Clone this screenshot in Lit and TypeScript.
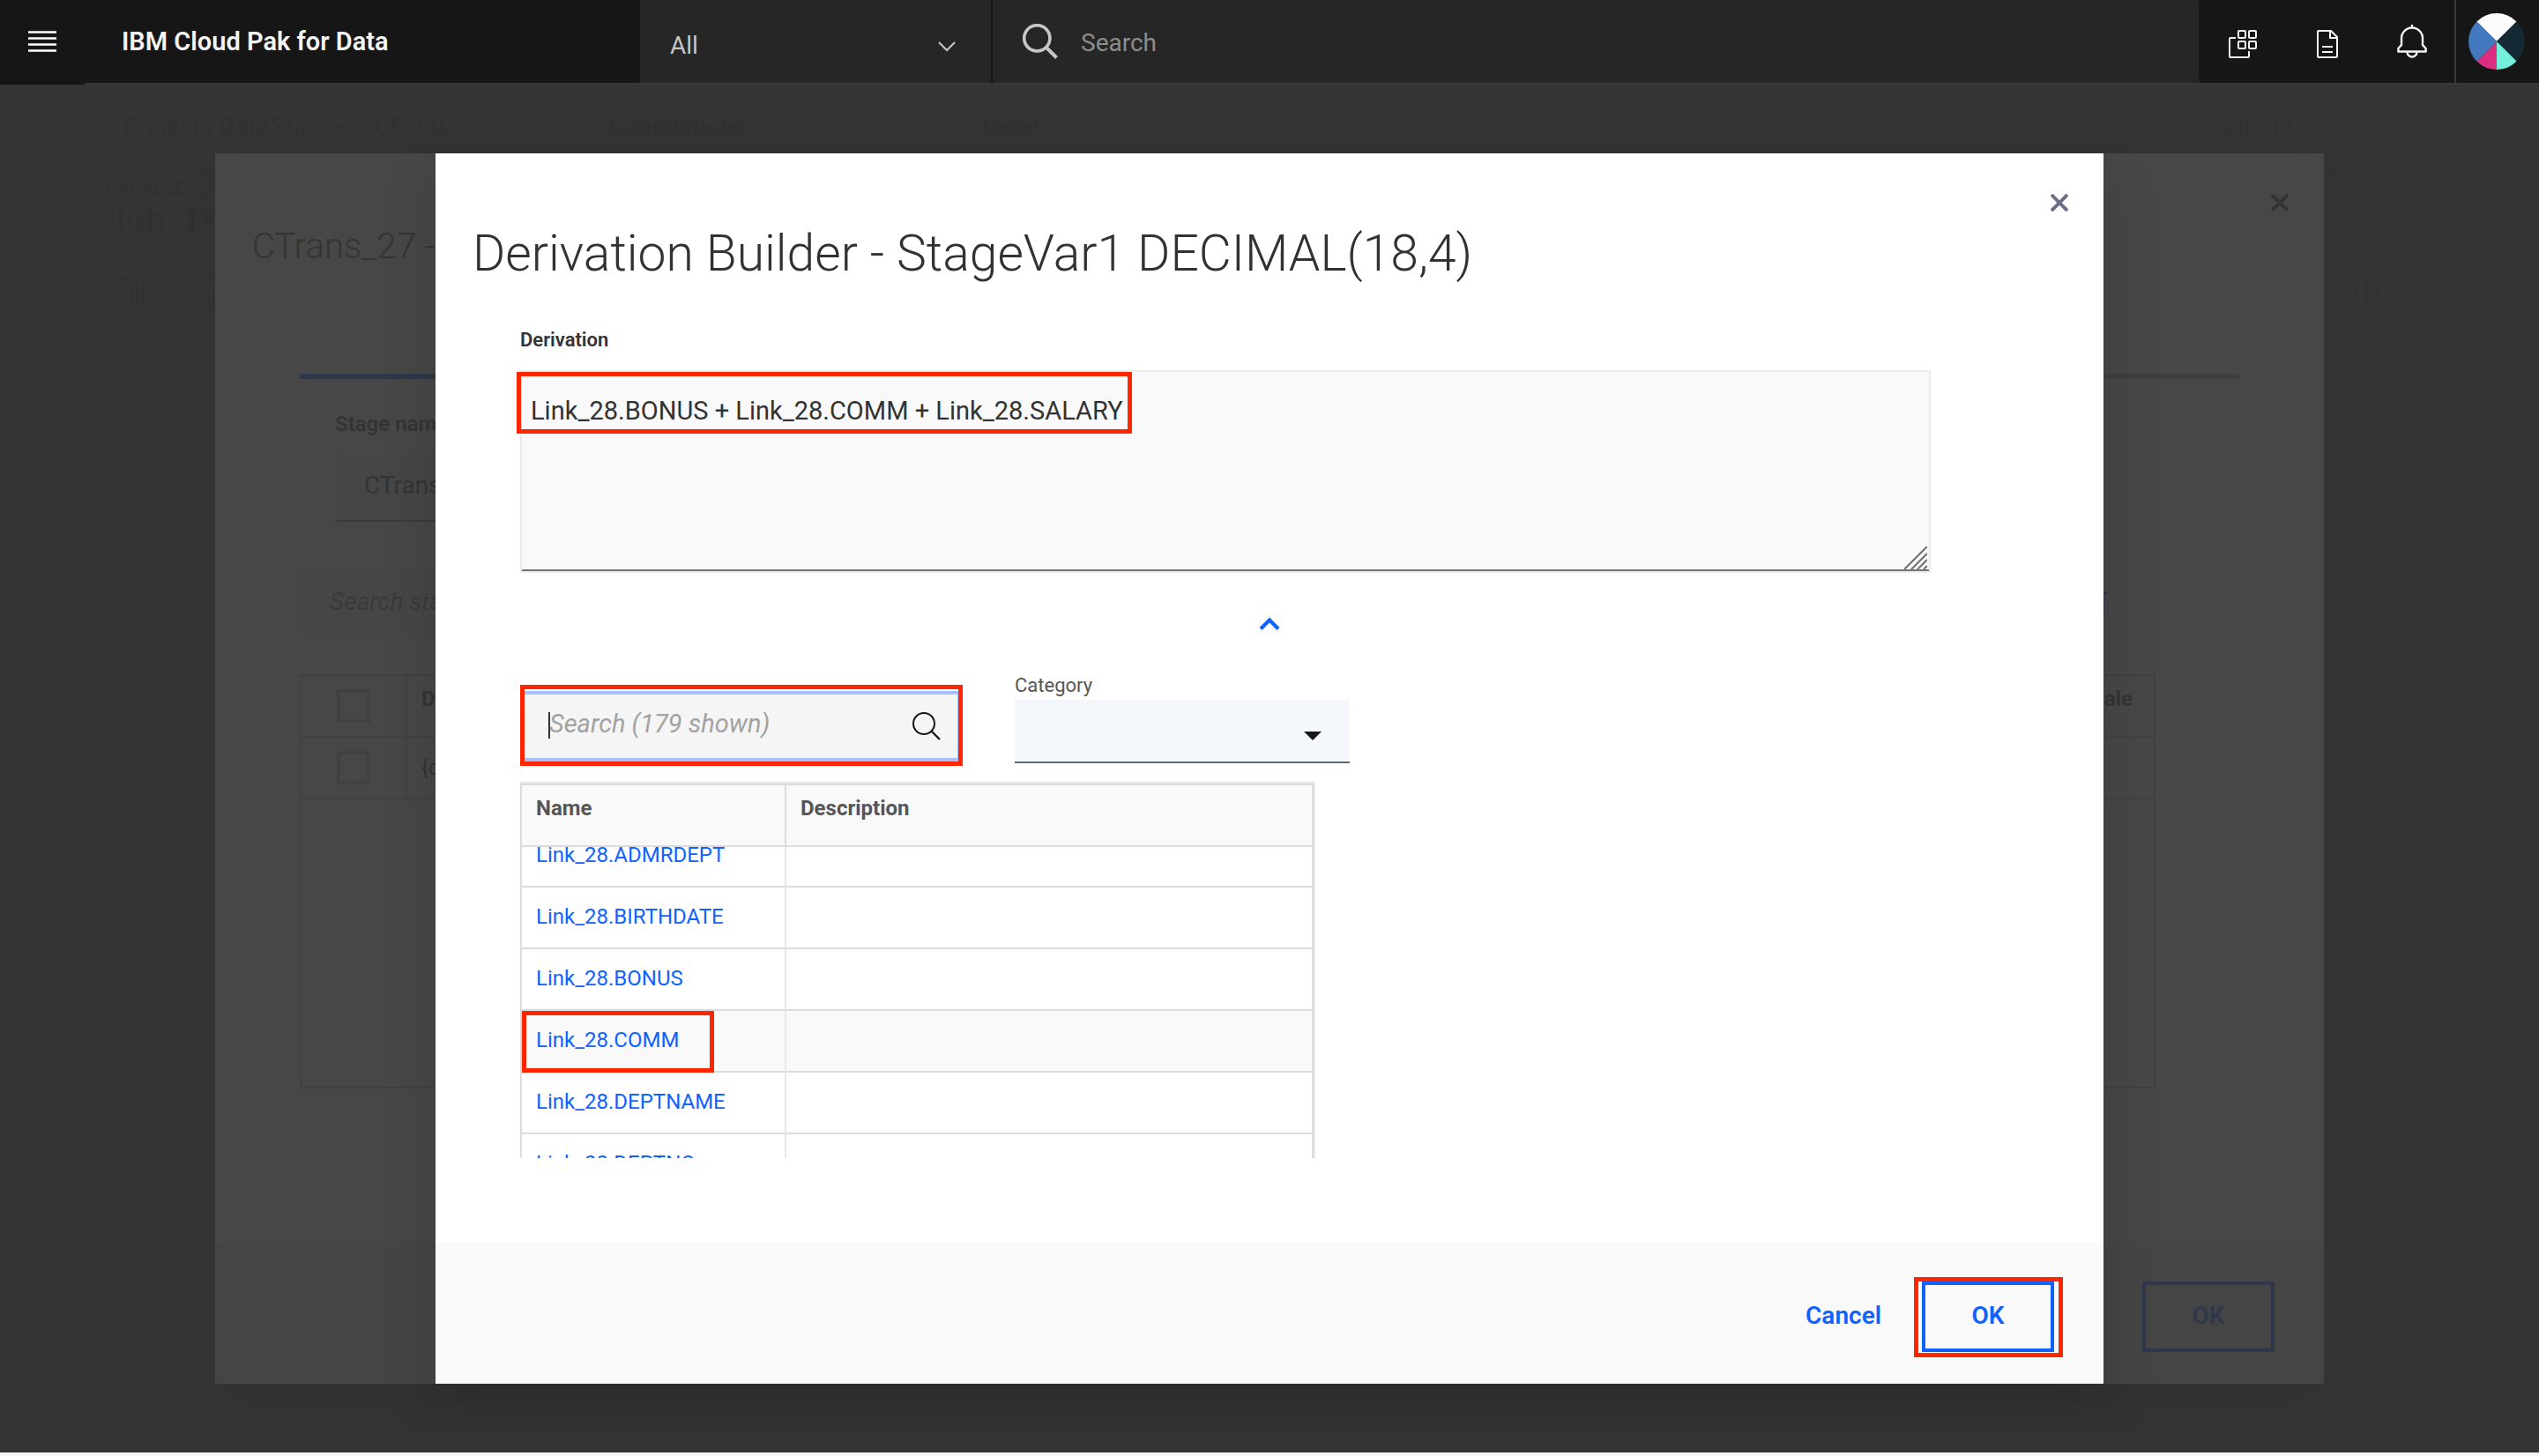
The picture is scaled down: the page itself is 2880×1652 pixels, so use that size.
import { LitElement, html, css, svg } from "lit";
import { customElement, state } from "lit/decorators.js";

const closeIcon = svg`<svg class="icon-close" viewBox="0 0 20 20" width="20" height="20" aria-hidden="true">
  <path d="M1 1 19 19M19 1 1 19" fill="none" stroke="currentColor" stroke-width="4"/></svg>`;

const FUNCTIONS = [
  "Link_28.ADMRDEPT",
  "Link_28.BIRTHDATE",
  "Link_28.BONUS",
  "Link_28.COMM",
  "Link_28.DEPTNAME",
  "Link_28.DEPTNO",
];

const shared = css`
  :host {
    box-sizing: border-box;
    font-family: Roboto, "Liberation Sans", sans-serif;
  }
  *, *::before, *::after { box-sizing: border-box; }
  button {
    font: inherit;
    color: inherit;
    background: none;
    border: 0;
    padding: 0;
    cursor: pointer;
    display: flex;
    align-items: center;
    justify-content: center;
  }
  input, select, textarea {
    font: inherit;
    color: inherit;
    background: none;
    border: 0;
    border-radius: 0;
    outline: 0;
    padding: 0;
    margin: 0;
    appearance: none;
  }
  svg { display: block; flex: none; }
`;

@customElement("app-topbar")
export class AppTopbar extends LitElement {
  static styles = [shared, css`
    :host { display: flex; height: 96px; background: #353535; color: #f4f4f4; font-size: 28px; }
    .menu { width: 96px; height: 96px; background: #161616; padding-bottom: 2px; }
    .bar { display: flex; flex: 1; border-bottom: 2px solid #393939; background: #262626; }
    .brand {
      width: 630px; padding-left: 42px; background: #161616; color: #f4f4f4;
      display: flex; align-items: center; text-decoration: none; font-size: 29px; font-weight: 600;
    }
    .scope { width: 400px; border-right: 2px solid #161616; display: grid; align-items: center; color: #c6c6c6; }
    .scope > * { grid-area: 1 / 1; }
    .scope select { height: 100%; padding: 8px 34px 0; width: 100%; }
    .scope svg { justify-self: end; margin: 12px 40px 0 0; pointer-events: none; }
    .search { flex: 1; display: flex; align-items: center; gap: 26px; padding-left: 34px; color: #c6c6c6; }
    .search input { flex: 1; min-width: 0; padding-top: 2px; }
    .search input::placeholder { color: #8d8d8d; opacity: 1; }
    .tools { display: flex; background: #161616; border-radius: 4px 0 0 4px; padding-left: 2px; }
    .tools button { width: 96px; }
    .tools .low { padding-top: 6px; }
    .tools .user { border-left: 2px solid #393939; padding-right: 2px; }
  `];

  render() {
    return html`
      <button class="menu" aria-label="Menu">
        <svg viewBox="0 0 32 24" width="32" height="24"><path d="M0 1.5H32M0 8.5H32M0 15.5H32M0 22.5H32" stroke="#fff" stroke-width="2.4"/></svg>
      </button>
      <div class="bar">
        <a class="brand" href="#">IBM Cloud Pak for Data</a>
        <div class="scope">
          <select aria-label="Search scope"><option>All</option></select>
          <svg viewBox="0 0 20 12" width="20" height="12"><path d="M1 1 10 10 19 1" fill="none" stroke="#c6c6c6" stroke-width="2"/></svg>
        </div>
        <div class="search">
          <svg viewBox="0 0 40 40" width="40" height="40"><circle cx="16.3" cy="16.3" r="14.6" fill="none" stroke="#c6c6c6" stroke-width="3.6"/><path d="M26.5 26.5 38.5 38.5" stroke="#c6c6c6" stroke-width="4"/></svg>
          <input type="text" placeholder="Search" aria-label="Search">
        </div>
        <div class="tools">
          <button class="low" aria-label="Switch application">
            <svg viewBox="0 0 32 32" width="32" height="32"><g fill="none" stroke="#f4f4f4" stroke-width="2"><rect x="11" y="1" width="8" height="8" rx="1"/><rect x="23" y="1" width="8" height="8" rx="1"/><rect x="11" y="13" width="8" height="8" rx="1"/><rect x="23" y="13" width="8" height="8" rx="1"/><path d="M8 9H2a1 1 0 0 0-1 1V30a1 1 0 0 0 1 1H22a1 1 0 0 0 1-1V24"/></g></svg>
          </button>
          <button class="low" aria-label="Documents">
            <svg viewBox="0 0 24 32" width="24" height="32"><g fill="none" stroke="#f4f4f4" stroke-width="2"><path d="M2 1H16L23 8V30a1 1 0 0 1-1 1H2a1 1 0 0 1-1-1V2a1 1 0 0 1 1-1Z"/><path d="M15 1V9H23M6 19H18M6 25H18"/></g></svg>
          </button>
          <button aria-label="Notifications">
            <svg viewBox="0 0 34 38" width="34" height="38"><g fill="none" stroke="#f4f4f4" stroke-width="2.4" stroke-linejoin="round"><path d="M17 0V3M5 23V15.500A12 12 0 0 1 29 15.500V23L32.600 27V30.500H1.400V27Z"/><path d="M11.500 31a5.500 5.500 0 0 0 11 0"/></g></svg>
          </button>
          <button class="user" aria-label="Profile">
            <svg viewBox="0 0 64 64" width="64" height="64">
              <path d="M32 32 9.400 9.400A32 32 0 0 1 54.600 9.400Z" fill="#fcfcfc"/>
              <path d="M32 32 54.600 9.400A32 32 0 0 1 54.600 54.600Z" fill="#152935"/>
              <path d="M32 32 54.600 54.600A32 32 0 0 1 32 64Z" fill="#74efd9"/>
              <path d="M32 32V64A32 32 0 0 1 9.400 54.600Z" fill="#dc2e80"/>
              <path d="M32 32 9.400 54.600A32 32 0 0 1 9.400 9.400Z" fill="#4178be"/>
            </svg>
          </button>
        </div>
      </div>`;
  }
}

@customElement("job-canvas")
export class JobCanvas extends LitElement {
  static styles = [shared, css`
    :host { display: block; color: #313131; font-size: 28px; }
    .crumbs { display: flex; align-items: center; padding: 30px 276px 0 139px; line-height: 36px; }
    .crumbs span { width: 420px; }
    .crumbs .path { width: 551px; }
    .crumbs .current { margin-left: auto; width: 90px; }
    .rule { margin: 28px 100px 0; height: 6px; background: #333336; }
    .job { padding: 0 120px; }
    .kind { font-size: 22px; line-height: 36px; }
    .name { font-size: 40px; line-height: 40px; }
    .tools { display: flex; padding: 44px 180px 0 129px; gap: 72px; }
    .tools .move { margin-left: auto; }
  `];

  render() {
    return html`
      <div class="crumbs">
        <span class="path">Projects DataStage-on-CF 4.0</span><span>Connections</span><span>Table</span><span class="current">Job_1*</span>
      </div>
      <div class="rule"></div>
      <div class="job"><div class="kind">PARALLEL JOB</div><div class="name">Job_1*</div></div>
      <div class="tools">
        <svg viewBox="0 0 34 30" width="34" height="30"><path d="M1 1H33V29H1ZM21 1V29M26 1V29" fill="none" stroke="#313131" stroke-width="2"/></svg>
        <svg viewBox="0 0 30 30" width="30" height="30"><path d="M1 1H29V29H1Z" fill="none" stroke="#313131" stroke-width="2"/></svg>
        <svg class="move" viewBox="0 0 30 30" width="30" height="30"><path d="M15 1V29M1 15H29M11 5 15 1 19 5M11 25 15 29 19 25M5 11 1 15 5 19M25 11 29 15 25 19" fill="none" stroke="#313131" stroke-width="2"/></svg>
      </div>`;
  }
}

const dialogStyles = css`
  :host { display: flex; flex-direction: column; }
  .top { display: flex; justify-content: flex-end; padding: 40px 34px 0; }
  .close { width: 32px; height: 32px; }
  .title { margin: 6px 0 0 42px; font-weight: 300; white-space: nowrap; overflow: hidden; }
  .actions {
    margin-top: auto; padding: 44px 56px 36px; display: flex; justify-content: flex-end; gap: 46px;
    font-size: 28px; font-weight: 600;
  }
  .actions button { height: 80px; padding-bottom: 4px; }
  .actions .ok { width: 150px; border: 4px solid currentColor; }
`;

@customElement("stage-dialog")
export class StageDialog extends LitElement {
  static styles = [shared, dialogStyles, css`
    :host { background: #474747; color: #343434; box-shadow: 0 24px 48px rgba(0, 0, 0, 0.04); }
    .title { font-size: 40px; line-height: 56px; }
    .body { padding: 116px 96px 60px; }
    .tabs { height: 6px; background: #3f3f3f; }
    .tab { width: 240px; height: 6px; background: #2f3849; }
    .label { display: block; margin: 35px 0 17px 40px; font-size: 24px; line-height: 32px; font-weight: 600; }
    .field { display: block; width: 600px; height: 78px; margin-left: 40px; padding: 0 33px 4px; font-size: 28px; background: #464646; border-bottom: 2px solid #3a3a3a; }
    .toolbar { display: flex; align-items: center; justify-content: space-between; margin: 52px 149px 41px 0; }
    .find { width: 600px; height: 80px; padding: 0 34px 4px; font-size: 28px; font-style: italic; background: #464646; }
    .find::placeholder { color: #3a3a3a; opacity: 1; }
    .frame { margin-right: 95px; height: 470px; border: 2px solid #414141; }
    .frame table { width: 100%; border-collapse: separate; border-spacing: 0; table-layout: fixed; font-size: 24px; text-align: left; }
    th, td { height: 70px; padding: 0 16px; border-bottom: 2px solid #424242; font-weight: 400; }
    th { font-weight: 700; vertical-align: top; padding-top: 10px; line-height: 32px; }
    .check { width: 120px; border-right: 2px solid #424242; padding: 0 0 0 40px; vertical-align: middle; }
    .check input { display: block; width: 38px; height: 38px; border: 4px solid #414141; }
    .last { text-align: right; padding-right: 24px; }
    .actions { background: #454545; color: #2e384a; }
  `];

  render() {
    return html`
      <div class="top"><button class="close" aria-label="Close stage">${closeIcon}</button></div>
      <h2 class="title">CTrans_27 -</h2>
      <div class="body">
        <div class="tabs"><div class="tab"></div></div>
        <label class="label" for="stage">Stage name</label>
        <input class="field" id="stage" type="text" .value=${"CTrans_27"}>
        <div class="toolbar">
          <input class="find" type="text" placeholder="Search stage variables" aria-label="Search stage variables">
          <button aria-label="Delete">
            <svg viewBox="0 0 32 32" width="32" height="32"><path d="M1 5H31M5 5V29H27V5M11 1H21M12 11V23M20 11V23" fill="none" stroke="#2e384a" stroke-width="2"/></svg>
          </button>
        </div>
        <div class="frame">
          <table>
            <thead><tr><th class="check"><input type="checkbox" aria-label="Select all"></th><th>Derivation</th><th class="last">Scale</th></tr></thead>
            <tbody><tr><td class="check"><input type="checkbox" aria-label="Select row"></td><td>{derivation}</td><td class="last"></td></tr></tbody>
          </table>
        </div>
      </div>
      <div class="actions"><button class="ok">OK</button></div>`;
  }
}

@customElement("derivation-dialog")
export class DerivationDialog extends LitElement {
  @state() private hovered = "Link_28.COMM";

  static styles = [shared, dialogStyles, css`
    :host { background: #fff; color: #323232; box-shadow: 0 24px 60px rgba(0, 0, 0, 0.14); }
    .close { color: #6b7086; }
    .title { font-size: 57px; line-height: 72px; }
    .body { padding: 46px 96px 96px; }
    .caption { display: block; font-size: 22px; line-height: 32px; font-weight: 600; }
    .editor { position: relative; width: 100%; max-width: 1600px; height: 230px; margin-top: 18px; border: 2px solid #ebebeb; }
    .editor textarea {
      display: block; width: 100%; height: 100%; resize: none; padding: 24px 10px; line-height: 40px; font-size: 29px;
      background: #f9f9f9; border-bottom: 2px solid #757575;
    }
    .grip { position: absolute; right: 2px; bottom: 2px; }
    .mark { position: absolute; border: 5px solid #ff2600; pointer-events: none; z-index: 3; }
    .mark-text { left: -6px; top: 0; width: 698px; height: 70px; }
    .mark-search { left: -4px; top: -11px; width: 502px; height: 92px; }
    .mark-row { left: 0; top: 0; width: 218px; height: 70px; }
    .mark-ok { left: -9px; top: -5px; width: 169px; height: 91px; }
    .collapse { width: 48px; height: 32px; margin: 42px auto 38px; }
    .filters { display: flex; align-items: flex-end; gap: 61px; }
    .search { position: relative; width: 500px; height: 80px; margin-bottom: 2px; border: 4px solid #a4c1fb; background: #f5f5f5; display: flex; align-items: center; padding: 0 19px 0 29px; }
    .search input { flex: 1; min-width: 0; height: 72px; padding-bottom: 6px; font-size: 29px; font-style: italic; }
    .search input::placeholder { color: #a2a2a2; opacity: 1; }
    .caret { position: absolute; left: 28px; top: 20px; width: 2px; height: 30px; background: #323232; }
    .category { width: 380px; }
    .category label { display: block; font-size: 22px; line-height: 32px; color: #565656; }
    .picker { display: grid; align-items: center; background: #f4f7fc; border-bottom: 2px solid #5a6872; height: 72px; }
    .picker > * { grid-area: 1 / 1; }
    .picker select { width: 100%; height: 100%; }
    .picker svg { justify-self: end; margin: 12px 32px 0 0; pointer-events: none; }
    .frame { position: relative; width: 902px; margin-top: 21px; border: 2px solid #e3e7ea; border-width: 2px 2px 0 0; }
    .scroll { height: 425px; overflow: hidden; border: 2px solid #dcdcdc; border-width: 2px 2px 0 2px; }
    table { width: 100%; border-collapse: separate; border-spacing: 0; table-layout: fixed; font-size: 24px; text-align: left; }
    th, td { height: 70px; padding: 0 16px; border-bottom: 2px solid #dcdcdc; }
    td { padding-bottom: 2px; }
    th { position: sticky; top: 0; z-index: 1; background: #f9f9f9; color: #565656; font-weight: 700; vertical-align: top; padding-top: 10px; line-height: 32px; }
    .name { width: 300px; border-right: 2px solid #e8e8e8; position: relative; }
    th.name { position: sticky; border-right-color: #dcdcdc; }
    tr.active td { background: #f9f9f9; }
    a { color: #0f62fe; text-decoration: none; }
    .actions { background: #f9f9f9; color: #0f62fe; }
    .confirm { position: relative; }
  `];

  firstUpdated() {
    this.renderRoot.querySelector(".scroll")!.scrollTop = 24;
  }

  render() {
    return html`
      <div class="top"><button class="close" aria-label="Close">${closeIcon}</button></div>
      <h1 class="title">Derivation Builder - StageVar1 DECIMAL(18,4)</h1>
      <div class="body">
        <label class="caption" for="derivation">Derivation</label>
        <div class="editor">
          <textarea id="derivation" spellcheck="false" .value=${"Link_28.BONUS + Link_28.COMM + Link_28.SALARY"}></textarea>
          <svg class="grip" viewBox="0 0 26 26" width="26" height="26"><path d="M0 26 26 0M8 26 26 8M15 26 26 15M22 26 26 22" fill="none" stroke="#6f6f6f" stroke-width="2"/></svg>
          <div class="mark mark-text"></div>
        </div>
        <button class="collapse" aria-label="Collapse">
          <svg viewBox="0 0 24 16" width="24" height="16"><path d="M2 13.500 12 3.500 22 13.500" fill="none" stroke="#0f62fe" stroke-width="4.200"/></svg>
        </button>
        <div class="filters">
          <div class="search">
            <input type="text" placeholder="Search (179 shown)" aria-label="Search functions">
            <span class="caret"></span>
            <svg viewBox="0 0 32 32" width="32" height="32"><circle cx="13" cy="13" r="12" fill="none" stroke="#161616" stroke-width="2"/><path d="M21.500 21.500 31 31" stroke="#161616" stroke-width="2.400"/></svg>
            <div class="mark mark-search"></div>
          </div>
          <div class="category">
            <label for="category">Category</label>
            <div class="picker">
              <select id="category"><option></option></select>
              <svg viewBox="0 0 20 10" width="20" height="10"><path d="M0 0H20L10 10Z" fill="#161616"/></svg>
            </div>
          </div>
        </div>
        <div class="frame">
          <div class="scroll">
            <table>
              <thead><tr><th class="name">Name</th><th>Description</th></tr></thead>
              <tbody>
                ${FUNCTIONS.map((name) => html`
                  <tr class=${name === this.hovered ? "active" : ""} @mouseenter=${() => (this.hovered = name)}>
                    <td class="name"><a href="#">${name}</a>${name === "Link_28.COMM" ? html`<div class="mark mark-row"></div>` : ""}</td>
                    <td></td>
                  </tr>`)}
              </tbody>
            </table>
          </div>
        </div>
      </div>
      <div class="actions">
        <button>Cancel</button>
        <div class="confirm"><button class="ok">OK</button><div class="mark mark-ok"></div></div>
      </div>`;
  }
}

@customElement("app-root")
export class AppRoot extends LitElement {
  static styles = css`
    :host { display: flex; flex-direction: column; min-height: 100vh; background: #343434; }
    .stage { flex: 1; display: grid; grid-template-columns: minmax(0, 1fr); border-bottom: 4px solid #f4f4f4; overflow: hidden; }
    .stage > * { grid-area: 1 / 1; justify-self: center; }
    .canvas { width: 100%; }
    .outer { width: min(2392px, 96%); margin: 78px 0; }
    .inner { width: min(1892px, 90%); margin: 78px 0; }
  `;

  render() {
    return html`
      <app-topbar></app-topbar>
      <main class="stage">
        <job-canvas class="canvas"></job-canvas>
        <stage-dialog class="outer"></stage-dialog>
        <derivation-dialog class="inner"></derivation-dialog>
      </main>`;
  }
}
